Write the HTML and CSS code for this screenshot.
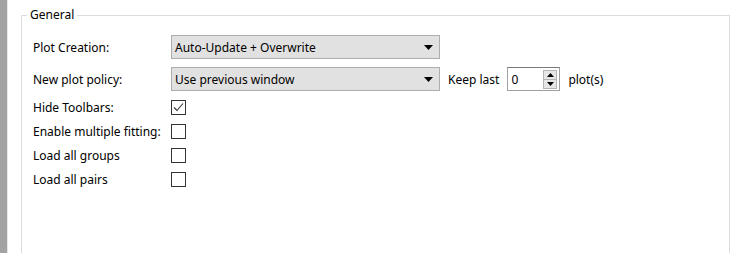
FILE: index.html
```html
<!DOCTYPE html>
<html>
<head>
  <link rel="stylesheet" href="styles.css">
</head>
<body>
  <div class="side-strip"></div>
  <div class="settings-page">
    <fieldset class="group-box">
      <legend class="group-title">General</legend>
      <div class="form-grid">
        <div class="form-label">Plot Creation:</div>
        <div class="form-field">
          <div class="combo">
            <span class="combo-text">Auto-Update + Overwrite</span>
            <svg class="combo-arrow" width="9" height="5" viewBox="0 0 9 5"><path d="M0 0h9L4.5 5z" fill="#000"/></svg>
          </div>
        </div>

        <div class="form-label">New plot policy:</div>
        <div class="form-field">
          <div class="combo">
            <span class="combo-text">Use previous window</span>
            <svg class="combo-arrow" width="9" height="5" viewBox="0 0 9 5"><path d="M0 0h9L4.5 5z" fill="#000"/></svg>
          </div>
          <span class="field-text">Keep last</span>
          <div class="spin-box">
            <span class="spin-value">0</span>
            <div class="spin-buttons">
              <div class="spin-btn"><svg width="7" height="4" viewBox="0 0 7 4"><path d="M0 4h7L3.5 0z" fill="#000"/></svg></div>
              <div class="spin-btn"><svg width="7" height="4" viewBox="0 0 7 4"><path d="M0 0h7L3.5 4z" fill="#000"/></svg></div>
            </div>
          </div>
          <span class="field-text">plot(s)</span>
        </div>

        <div class="form-label">Hide Toolbars:</div>
        <div class="form-field">
          <div class="check-box">
            <svg width="13" height="13" viewBox="0 0 13 13"><path d="M2 6.5l3 3 6-7" fill="none" stroke="#333" stroke-width="1.1"/></svg>
          </div>
        </div>

        <div class="form-label">Enable multiple fitting:</div>
        <div class="form-field"><div class="check-box"></div></div>

        <div class="form-label">Load all groups</div>
        <div class="form-field"><div class="check-box"></div></div>

        <div class="form-label">Load all pairs</div>
        <div class="form-field"><div class="check-box"></div></div>
      </div>
    </fieldset>
  </div>
</body>
</html>
```

FILE: styles.css
```css
body {
  margin: 0;
  display: flex;
  height: 253px;
  overflow: hidden;
  background-color: #ffffff;
  font-family: 'Noto Sans', 'Open Sans', Arial, sans-serif;
  font-size: 12px;
  color: #000;
}

.side-strip {
  width: 7px;
  flex-shrink: 0;
  background-color: #a3a3a3;
  border-right: 1px solid #e6e6e6;
}

.settings-page {
  flex: 1;
  padding: 8px 12px 0 13px;
}

.group-box {
  margin: 0;
  padding: 9px 11px 0 11px;
  border: 1px solid #dcdcdc;
  height: 252px;
  box-sizing: border-box;
}

.group-title {
  margin-left: -6px;
  padding: 0 3px;
  line-height: 14px;
}

.form-grid {
  display: grid;
  grid-template-columns: 138px auto;
  grid-template-rows: 32px 32px 24px 24px 24px 24px;
}

.form-label {
  display: flex;
  align-items: center;
  white-space: nowrap;
}

.form-field {
  display: flex;
  align-items: center;
  gap: 8px;
}

.combo {
  width: 269px;
  height: 24px;
  box-sizing: border-box;
  background-color: #e1e1e1;
  border: 1px solid #adadad;
  display: flex;
  align-items: center;
  justify-content: space-between;
  padding: 0 6px 0 3px;
}

.field-text {
  white-space: nowrap;
}

.spin-box {
  width: 53px;
  height: 24px;
  box-sizing: border-box;
  border: 1px solid #a0a0a0;
  border-top-color: #7a7a7a;
  display: flex;
  align-items: center;
  justify-content: space-between;
  padding: 0 2px 0 3px;
}

.spin-buttons {
  width: 14px;
  height: 19px;
  border: 1px solid #b4b4b4;
  box-sizing: border-box;
  background-color: #e6e6e6;
  display: flex;
  flex-direction: column;
}

.spin-btn {
  flex: 1;
  display: flex;
  align-items: center;
  justify-content: center;
}

.spin-btn + .spin-btn {
  border-top: 1px solid #b4b4b4;
}

.check-box {
  width: 15px;
  height: 15px;
  box-sizing: border-box;
  border: 1px solid #333;
  display: flex;
  align-items: center;
  justify-content: center;
  background: #fff;
}
```
